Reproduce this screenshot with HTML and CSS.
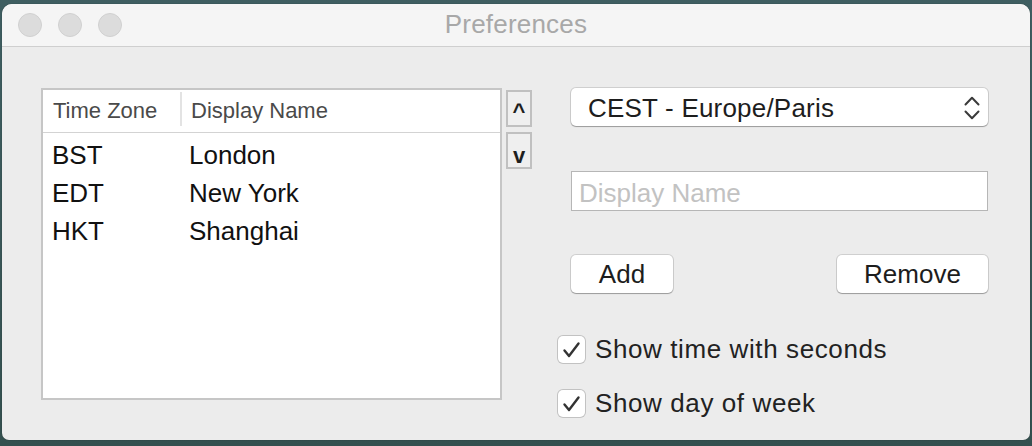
FILE: index.html
```html
<!DOCTYPE html>
<html>
<head>
<meta charset="utf-8">
<title>Preferences</title>
<link rel="stylesheet" href="styles.css">
</head>
<body>
<div class="window">
  <div class="titlebar">
    <div class="lights">
      <span class="light"></span>
      <span class="light"></span>
      <span class="light"></span>
    </div>
    <div class="title">Preferences</div>
    <div></div>
  </div>
  <div class="content">
    <div class="table">
      <div class="thead">
        <div class="th th-zone">Time Zone</div>
        <div class="th-divider"></div>
        <div class="th th-name">Display Name</div>
      </div>
      <div class="tbody">
        <div class="row"><span>BST</span><span>London</span></div>
        <div class="row"><span>EDT</span><span>New York</span></div>
        <div class="row"><span>HKT</span><span>Shanghai</span></div>
      </div>
    </div>
    <div class="arrows">
      <div class="arrow arrow-up">^</div>
      <div class="arrow arrow-down">v</div>
    </div>
    <div class="side">
      <div class="popup">
        <span>CEST - Europe/Paris</span>
        <svg class="chevrons" width="16" height="25" viewBox="0 0 16 25">
          <path d="M1.5 8.5 L8 1.8 L14.5 8.5" fill="none" stroke="#3a3a3a" stroke-width="2" stroke-linecap="round" stroke-linejoin="round"/>
          <path d="M1.5 15.5 L8 22.2 L14.5 15.5" fill="none" stroke="#3a3a3a" stroke-width="2" stroke-linecap="round" stroke-linejoin="round"/>
        </svg>
      </div>
      <input class="field" type="text" placeholder="Display Name">
      <div class="buttons">
        <div class="btn btn-add">Add</div>
        <div class="btn btn-remove">Remove</div>
      </div>
      <div class="check check-first">
        <span class="box">
          <svg width="27" height="27" viewBox="0 0 27 27">
            <path d="M6.5 14.5 L11 20 L20.5 7.5" fill="none" stroke="#333" stroke-width="2.4" stroke-linecap="round" stroke-linejoin="round"/>
          </svg>
        </span>
        <span class="label">Show time with seconds</span>
      </div>
      <div class="check check-second">
        <span class="box">
          <svg width="27" height="27" viewBox="0 0 27 27">
            <path d="M6.5 14.5 L11 20 L20.5 7.5" fill="none" stroke="#333" stroke-width="2.4" stroke-linecap="round" stroke-linejoin="round"/>
          </svg>
        </span>
        <span class="label">Show day of week</span>
      </div>
    </div>
  </div>
</div>
</body>
</html>
```
FILE: styles.css
```css
* { box-sizing: border-box; }
html, body { margin: 0; padding: 0; }
body {
  width: 1032px;
  height: 446px;
  background: linear-gradient(180deg, #3f5e61 0%, #34504f 100%);
  padding: 4px 2px 6px 2px;
  font-family: "Liberation Sans", Arial, sans-serif;
  overflow: hidden;
}
.window {
  width: 1028px;
  height: 436px;
  background: #ececec;
  border-radius: 10px 10px 7px 7px;
  overflow: hidden;
  box-shadow: 0 0 1px rgba(0,0,0,0.5);
}
.titlebar {
  height: 43px;
  background: #f5f5f5;
  border-bottom: 1px solid #cfcfcf;
  display: grid;
  grid-template-columns: 1fr auto 1fr;
  align-items: center;
}
.lights {
  display: flex;
  gap: 16px;
  padding-left: 16px;
  padding-bottom: 1px;
}
.light {
  width: 24px;
  height: 24px;
  border-radius: 50%;
  background: #dcdcdc;
  border: 1px solid #d0d0d0;
}
.title {
  font-size: 26px;
  color: #a8a8a8;
  padding-bottom: 2px;
  letter-spacing: 0.2px;
}
.content {
  display: flex;
  align-items: flex-start;
  padding: 41px 0 0 39px;
}
.table {
  width: 461px;
  height: 312px;
  border: 2px solid #c6c6c6;
  background: #fff;
}
.thead {
  display: flex;
  align-items: center;
  height: 43px;
  border-bottom: 1px solid #d3d3d3;
}
.th {
  font-size: 22px;
  color: #4a4a4a;
  line-height: 40px;
}
.th-zone { width: 137px; padding-left: 10px; }
.th-divider { width: 2px; height: 34px; background: #e3e3e3; margin-top: -4px; }
.th-name { padding-left: 9px; }
.tbody { padding-top: 3px; }
.row {
  display: grid;
  grid-template-columns: 137px 1fr;
  padding-left: 9px;
  height: 38px;
  line-height: 38px;
  font-size: 26px;
  color: #111;
}
.arrows {
  display: flex;
  flex-direction: column;
  gap: 5px;
  margin: 2px 0 0 4px;
}
.arrow {
  width: 26px;
  height: 37px;
  border: 2px solid #c0c0c0;
  background: #efefef;
  text-align: center;
  font-weight: bold;
  font-size: 22px;
  color: #1e1e1e;
}
.arrow-up { line-height: 40px; }
.arrow-down { line-height: 44px; }
.side {
  width: 431px;
  margin-left: 26px;
  display: flex;
  flex-direction: column;
}
.popup {
  margin-left: 13px;
  width: 417px;
  height: 38px;
  background: #fff;
  border-radius: 5px;
  box-shadow: 0 0 0 1px rgba(0,0,0,0.12), 0 1px 1px rgba(0,0,0,0.25);
  display: flex;
  align-items: center;
  justify-content: space-between;
  padding: 2px 8px 0 17px;
  font-size: 26px;
  color: #1d1d1d;
  letter-spacing: 0.2px;
}
.field {
  margin: 45px 0 0 13px;
  width: 417px;
  height: 40px;
  border: 1px solid #b6b6b6;
  background: #fff;
  font-family: "Liberation Sans", Arial, sans-serif;
  font-size: 26px;
  padding: 5px 7px 0 7px;
  outline: none;
  color: #1d1d1d;
}
.field::placeholder { color: #c2c2c2; }
.buttons {
  margin: 44px 0 0 13px;
  width: 417px;
  display: flex;
  justify-content: space-between;
}
.btn {
  height: 38px;
  background: #fff;
  border-radius: 5px;
  box-shadow: 0 0 0 1px rgba(0,0,0,0.12), 0 1px 1px rgba(0,0,0,0.25);
  font-size: 26px;
  line-height: 39px;
  text-align: center;
  color: #1d1d1d;
}
.btn-add { width: 102px; }
.btn-remove { width: 151px; }
.check {
  display: flex;
  align-items: center;
  gap: 10px;
  font-size: 26px;
  color: #222;
}
.check-first { margin-top: 42px; }
.check-second { margin-top: 25px; }
.box {
  width: 27px;
  height: 27px;
  border-radius: 5px;
  background: #fff;
  box-shadow: 0 0 0 1px #c2c2c2;
  display: flex;
}
.label { line-height: 29px; letter-spacing: 0.6px; }
```
